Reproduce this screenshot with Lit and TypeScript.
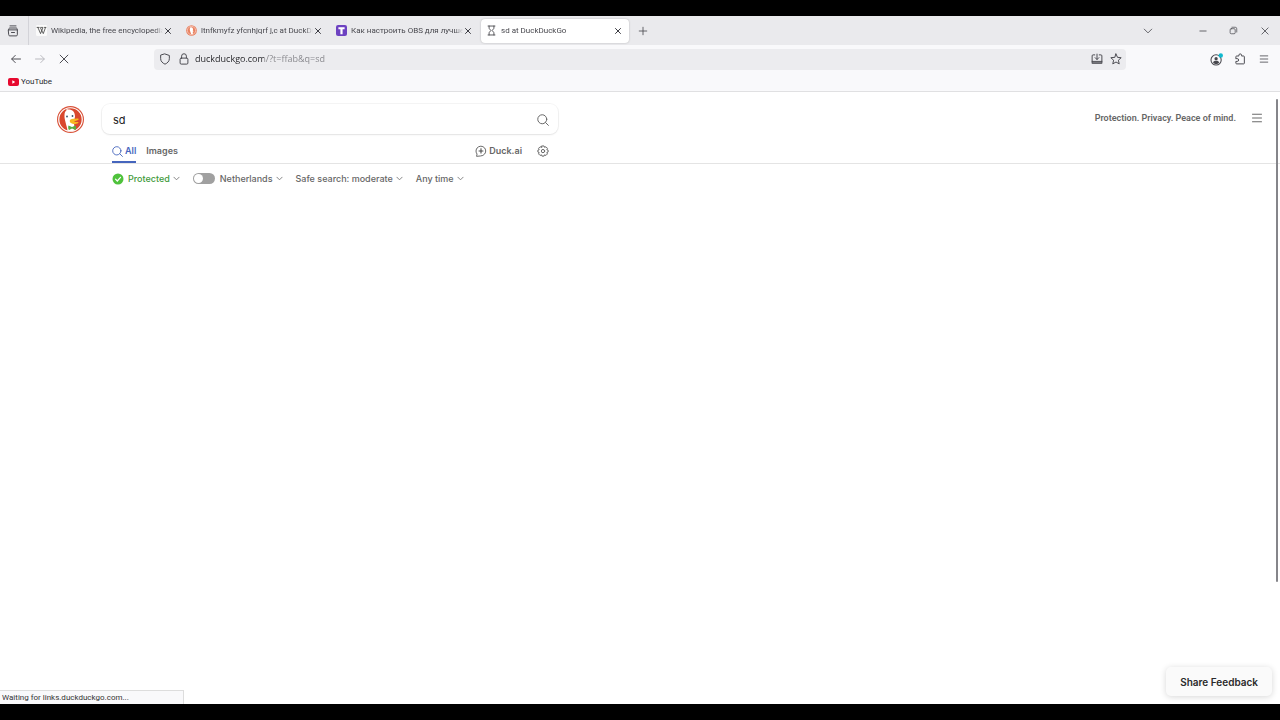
import { LitElement, html, css, svg, nothing, TemplateResult } from "lit";
import { customElement } from "lit/decorators.js";
import { classMap } from "lit/directives/class-map.js";

const icon = (body: TemplateResult, size = 12, box = 16) =>
  html`<svg class="icon" width=${size} height=${size} viewBox="0 0 ${box} ${box}" fill="none"
    stroke="currentColor" stroke-width="1.3" stroke-linecap="round" stroke-linejoin="round" aria-hidden="true">${body}</svg>`;

const close = svg`<path d="M3 3l10 10M13 3L3 13" stroke-width="2"/>`;
const chevron = svg`<path d="M2 5l6 6 6-6"/>`;
const smallChevron = svg`<path d="M2 5l6 6 6-6" stroke-width="2"/>`;
const menu = svg`<path d="M2 3h12M2 8h12M2 13h12"/>`;
const search = svg`<circle cx="7" cy="7" r="6"/><path d="M11.4 11.4L15.2 15.2"/>`;

const wikiIcon = html`<svg width="11" height="11" viewBox="0 0 16 16" aria-hidden="true">
  <rect width="16" height="16" rx="2" fill="#fafafa"/>
  <path d="M1 3.5h4M6.5 3.5h3.6M11.6 3.5H15M2.8 3.7l3.8 8.8 3.6-8.8M6.2 3.7l4.4 8.8 3.2-8.8" fill="none" stroke="#333" stroke-width="1.1"/></svg>`;
const duckTabIcon = html`<svg width="11" height="11" viewBox="0 0 16 16" aria-hidden="true">
  <circle cx="8" cy="8" r="7.800" fill="#e8805f"/><circle cx="8" cy="8" r="6" fill="none" stroke="#fbe0d8" stroke-width=".9"/>
  <path d="M6.200 3.600c2-.7 4 .5 4.100 2.900l-.4 1.800 1.600.4-1.700 1.200.3 3.300-2.300.4c-.9-2.700-2.600-5.800-2.300-7.900z" fill="#fff"/></svg>`;
const tIcon = html`<svg width="11" height="11" viewBox="0 0 16 16" aria-hidden="true">
  <rect width="16" height="16" rx="3" fill="#6d42c1"/><path d="M3.500 3.300h9v3H9.600v7H6.400v-7H3.500z" fill="#fff"/></svg>`;
const hourglass = icon(svg`<path d="M3 1.500h10M3 14.500h10M4.500 1.500v3.300L7 8l-2.500 3.200v3.300M11.500 1.500v3.300L9 8l2.500 3.200v3.300"/>`, 11);

const tabs = [
  { title: "Wikipedia, the free encyclopedia", icon: wikiIcon, active: false },
  { title: "ltnfkmyfz yfcnhjqrf j,c at DuckDuckGo", icon: duckTabIcon, active: false },
  { title: "Как настроить OBS для лучшего", icon: tIcon, active: false },
  { title: "sd at DuckDuckGo", icon: hourglass, active: true },
];

const shared = css`
  :host, * { box-sizing: border-box; }
  button, input { font: inherit; color: inherit; border: 0; background: none; padding: 0; margin: 0; min-width: 0; outline: none; }
  button { display: inline-flex; align-items: center; justify-content: center; white-space: nowrap; flex: none; }
  a { color: inherit; text-decoration: none; }
  svg { display: block; flex: none; }
`;

@customElement("browser-chrome")
class BrowserChrome extends LitElement {
  static styles = [shared, css`
    :host { display: block; flex: none; font: 8px/12px Roboto, "Noto Sans", sans-serif; color: #48484e; }
    .strip { display: flex; align-items: center; height: 29px; background: #eaeaed; }
    .recent { width: 29px; height: 29px; padding-right: 2px; border-right: 1px solid #d3d3d8; }
    .tabs { display: flex; gap: 2px; padding-left: 2px; min-width: 0; }
    .tab { display: flex; align-items: center; flex: 0 1 148px; width: 148px; min-width: 40px; height: 24px; padding: 0 6px 0 5px; border-radius: 4px; }
    .active { background: #fff; box-shadow: 0 0 2px rgba(0, 0, 0, .25); }
    .title { flex: 1; gap: 4px; justify-content: flex-start; overflow: hidden; }
    .label { flex: 1; text-align: left; overflow: hidden; -webkit-mask-image: linear-gradient(to left, transparent, #000 8px); mask-image: linear-gradient(to left, transparent, #000 8px); }
    .close { width: 10px; height: 16px; color: #3b3b42; }
    .add { width: 26px; height: 24px; margin-left: 1px; }
    .window { display: flex; align-items: center; margin-left: auto; }
    .window button { width: 31px; height: 28px; }
    .window .list { width: 28px; margin-right: 25px; }
    .toolbar { display: flex; align-items: center; height: 28px; padding: 0 4px; background: #f9f9fb; }
    .toolbar button { width: 24px; height: 24px; }
    .toolbar .dim { color: #b8b8bd; }
    .space { flex: 0 1 78px; }
    .url { flex: 1; display: flex; align-items: center; height: 21px; padding: 0 1px; border-radius: 4px; background: #ececef; min-width: 0; }
    .toolbar .url button { width: 19px; height: 20px; }
    .address { flex: 1; font: 9px/14px "Open Sans", "Noto Sans", sans-serif; margin-left: 2px; -webkit-text-fill-color: transparent;
      background: linear-gradient(to right, #222226 69px, #85858a 69px); -webkit-background-clip: text; background-clip: text; }
    .bookmarks { display: flex; align-items: center; height: 19px; padding: 0 8px; background: #f9f9fb; border-bottom: 1px solid #e0e0e2; }
    .bookmarks a { display: flex; align-items: center; gap: 2px; color: #2b2b30; }
  `];

  render() {
    return html`
      <div class="strip">
        <button class="recent" aria-label="Recent browsing">${icon(svg`<path d="M4 1.200h8M2.200 6.500h11.600v6.500a1.500 1.500 0 0 1-1.500 1.500H3.700a1.500 1.500 0 0 1-1.500-1.500zM6 10h4M2.200 6.500c0-1.700.6-2.500 1.700-2.500h8.200c1.100 0 1.700.8 1.700 2.500"/>`)}</button>
        <div class="tabs">${tabs.map((t) => html`
          <div class=${classMap({ tab: true, active: t.active })}>
            <button class="title">${t.icon}<span class="label">${t.title}</span></button>
            <button class="close" aria-label="Close tab">${icon(close, 8)}</button>
          </div>`)}</div>
        <button class="add" aria-label="New tab">${icon(svg`<path d="M8 2v12M2 8h12"/>`, 10)}</button>
        <div class="window">
          <button class="list" aria-label="List all tabs">${icon(chevron, 10)}</button>
          <button aria-label="Minimize">${icon(svg`<path d="M3 8h10"/>`, 10)}</button>
          <button aria-label="Restore">${icon(svg`<rect x="2" y="4.800" width="9" height="9" rx="2"/><path d="M5.200 2.200h5.800a2.800 2.800 0 0 1 2.800 2.800v5.800"/>`, 9)}</button>
          <button aria-label="Close">${icon(svg`<path d="M3 3l10 10M13 3L3 13"/>`, 10)}</button>
        </div>
      </div>
      <div class="toolbar">
        <button aria-label="Back">${icon(svg`<path d="M14 8H2.500M7 3.200L2.200 8 7 12.800"/>`)}</button>
        <button class="dim" aria-label="Forward">${icon(svg`<path d="M2 8h11.500M9 3.200L13.800 8 9 12.800"/>`)}</button>
        <button aria-label="Stop">${icon(svg`<path d="M2.800 2.800l10.400 10.400M13.200 2.800L2.800 13.200"/>`)}</button>
        <span class="space"></span>
        <div class="url">
          <button aria-label="Tracking protection">${icon(svg`<path d="M8 1.300l5.800 2v4.200c0 3.500-2.500 6-5.800 7.400-3.300-1.400-5.800-3.900-5.800-7.400V3.300z"/>`)}</button>
          <button aria-label="Connection secure">${icon(svg`<rect x="2.800" y="6.800" width="10.400" height="8" rx="1.500"/><path d="M4.800 6.800V4.200a3.200 3.200 0 0 1 6.400 0v2.600"/>`)}</button>
          <input class="address" aria-label="Address" value="duckduckgo.com/?t=ffab&amp;q=sd" spellcheck="false">
          <button aria-label="Install app">${icon(svg`<path d="M5 2.500H2.800A1.300 1.300 0 0 0 1.500 3.800v9.400h13V3.800a1.300 1.300 0 0 0-1.300-1.300H11M1.500 11.200h13M1.500 13.600h13M8 1.500v7M5.500 6.200L8 8.700l2.500-2.500"/>`)}</button>
          <button aria-label="Bookmark">${icon(svg`<path d="M8 1.300l2 4.500 4.900.5-3.700 3.300 1.100 4.900L8 12l-4.300 2.500 1.100-4.900L1.100 6.300 6 5.800z"/>`)}</button>
        </div>
        <span class="space"></span>
        <button aria-label="Account">${icon(svg`<circle cx="7.500" cy="8.500" r="6.300"/><circle cx="7.500" cy="7" r="2" fill="currentColor" stroke="none"/><path d="M3.800 12c.3-2 1.500-2.500 3.700-2.500s3.400.5 3.700 2.500c-1 1.200-2.400 1.600-3.700 1.600S4.800 13.200 3.800 12z" fill="currentColor" stroke="none"/><circle cx="13.300" cy="3" r="2.700" fill="#10b9cf" stroke="none"/>`, 13)}</button>
        <button aria-label="Extensions">${icon(svg`<path d="M2.500 6.500V5a1 1 0 0 1 1-1h3V3a1.800 1.800 0 0 1 3.600 0v1h2.700a1 1 0 0 1 1 1v8.500a1 1 0 0 1-1 1H3.500a1 1 0 0 1-1-1v-2.300h1.800a1.800 1.800 0 0 0 0-3.700H2.500"/>`)}</button>
        <button aria-label="Menu">${icon(menu, 10)}</button>
      </div>
      <div class="bookmarks"><a href="#">
        <svg width="11" height="8" viewBox="0 0 11 8" aria-hidden="true"><rect width="11" height="8" rx="2" fill="#e6092f"/><path d="M4.300 2.300v3.400L7.200 4z" fill="#fff"/></svg>YouTube</a></div>
    `;
  }
}

@customElement("search-page")
class SearchPage extends LitElement {
  static styles = [shared, css`
    :host { display: flex; flex-direction: column; position: relative; flex: 1; background: #fff; font: 500 9px/12px Inter, Roboto, sans-serif; color: #666; }
    header { display: flex; align-items: flex-start; padding: 12px 17px 0 57px; border-bottom: 1px solid #e4e4e4; }
    .logo { margin: 2px 18px 0 0; }
    .main { flex: 0 1 456px; min-width: 0; }
    form { display: flex; align-items: center; height: 30px; padding: 1px 9px 0 11px; border-radius: 8px; box-shadow: 0 0 0 1px rgba(0, 0, 0, .04), 0 1px 2px rgba(0, 0, 0, .08); }
    .query { flex: 1; font-size: 11px; line-height: 14px; font-weight: 400; color: #222; }
    nav { display: flex; align-items: center; height: 29px; padding: 5px 9px 0 10px; font-weight: 600; }
    nav a, nav button { display: flex; align-items: center; gap: 2px; height: 24px; }
    .images { margin-left: 10px; }
    .current { color: #4565bd; box-shadow: inset 0 -2px #4565bd; }
    .ai { margin-left: auto; margin-right: 15px; }
    .aside { display: flex; align-items: center; gap: 15px; height: 27px; margin-left: auto; font-family: Roboto, sans-serif; font-weight: 600; }
    .filters { display: flex; align-items: center; gap: 13px; padding: 6px 0 0 112px; height: 23px; }
    .filters button { gap: 3px; }
    .protected { color: #3f9a3b; }
    .chev { color: #777; }
    .region { display: flex; align-items: center; gap: 5px; }
    .switch { appearance: none; display: flex; align-items: center; width: 22px; height: 11px; padding: 1px; border-radius: 6px; background: #a0a0a0; }
    .switch::before { content: ""; width: 9px; height: 9px; border-radius: 50%; background: #fff; }
    .thumb { position: absolute; right: 2px; top: 7px; width: 2px; height: 79%; border-radius: 1px; background: #85858a; }
    .status { position: absolute; left: 0; bottom: 0; width: 184px; padding: 0 2px; border: 1px solid #ddd; border-width: 1px 1px 0 0; background: #f9f9fb; font: 8px/13px Roboto, "Noto Sans", sans-serif; color: #333; }
    .feedback { position: absolute; right: 8px; bottom: 8px; height: 29px; padding: 0 14px; border-radius: 5px; background: #fafafa; color: #2a2a2a; font-size: 10px; font-weight: 600; box-shadow: 0 1px 6px rgba(0, 0, 0, .16); }
  `];

  filter(label: string, name: string, before: TemplateResult | typeof nothing = nothing) {
    return html`<button class=${name}>${before}<span>${label}</span><span class="chev">${icon(smallChevron, 7)}</span></button>`;
  }

  render() {
    const check = html`<svg width="13" height="12" viewBox="0 0 13 12" aria-hidden="true"><circle cx="6" cy="6" r="5.500" fill="#4fc23c"/><path d="M3.500 6.200l1.800 1.800 3.200-3.700" fill="none" stroke="#fff" stroke-width="1.200" stroke-linecap="round"/></svg>`;
    return html`
      <header>
        <a class="logo" href="#" aria-label="DuckDuckGo home">
          <svg width="27" height="27" viewBox="0 0 54 54" aria-hidden="true">
            <circle cx="27" cy="27" r="27" fill="#d9533a"/><circle cx="27" cy="27" r="23.500" fill="#d9482e" stroke="#fff" stroke-width="2.400"/>
            <path d="M19 9c-2-2 1-3 4-2 8 0 13 5 13 14l-2 10 1 18c-5 2-11 1.500-14 .5C20 40 14 26 15 18c.3-5 1-7 4-9z" fill="#fff"/>
            <circle cx="20" cy="21" r="1.800" fill="#37536b"/><circle cx="31" cy="20" r="1.800" fill="#37536b"/>
            <path d="M26 28c4-4 8-2 13-3 4-.5 6 1 3 3-3 2-7 2-8 3 3 2 9 0 9 2-1 3-10 4-13 2-3-1-6-4-4-7z" fill="#f8b820"/>
            <path d="M23 39l7 3 7-3c2 2 1 8 0 9l-7-3-6 3c-2-2-2-7-1-9z" fill="#59ad43"/>
          </svg></a>
        <div class="main">
          <form role="search">
            <input class="query" aria-label="Search" value="sd" spellcheck="false">
            <button type="button" aria-label="Search">${icon(search)}</button>
          </form>
          <nav>
            <a class="current" href="#">${icon(search, 11)}<span>All</span></a>
            <a class="images" href="#">Images</a>
            <a class="ai" href="#">${icon(svg`<path d="M2.200 14.600l.5-2.500A6.500 6.500 0 1 1 8 14.600z"/><path d="M8 4.500c.4 2.200 1.200 3 3.300 3.500C9.200 8.500 8.400 9.300 8 11.500 7.600 9.300 6.800 8.500 4.700 8 6.800 7.500 7.600 6.700 8 4.500z" fill="currentColor" stroke-width=".6"/>`)}<span>Duck.ai</span></a>
            <button aria-label="Search settings">${icon(svg`<path d="M6.600 1.300h2.800l.6 1.800 1.900-.7 2 2-.8 1.900 1.700.5v2.600l-1.700.6.8 1.900-2 2-1.900-.8-.6 1.700H6.600L6 13.100l-1.900.8-2-2 .8-1.900-1.700-.6V6.800l1.700-.5-.8-1.900 2-2 1.900.7z"/><circle cx="8" cy="8.100" r="2.200"/>`)}</button>
          </nav>
        </div>
        <div class="aside"><span>Protection. Privacy. Peace of mind.</span><button aria-label="Open menu">${icon(menu, 12)}</button></div>
      </header>
      <div class="filters">
        ${this.filter("Protected", "protected", check)}
        <div class="region"><input class="switch" type="checkbox" role="switch" aria-label="Filter by region">${this.filter("Netherlands", "country")}</div>
        ${this.filter("Safe search: moderate", "safe")}
        ${this.filter("Any time", "time")}
      </div>
      <div class="thumb"></div>
      <div class="status">Waiting for links.duckduckgo.com...</div>
      <button class="feedback">Share Feedback</button>
    `;
  }
}

@customElement("app-root")
class AppRoot extends LitElement {
  static styles = css`
    :host { display: flex; flex-direction: column; box-sizing: border-box; min-height: 100vh; padding: 16px 0; background: #000; overflow: hidden; }
  `;
  render() {
    return html`<browser-chrome></browser-chrome><search-page></search-page>`;
  }
}
